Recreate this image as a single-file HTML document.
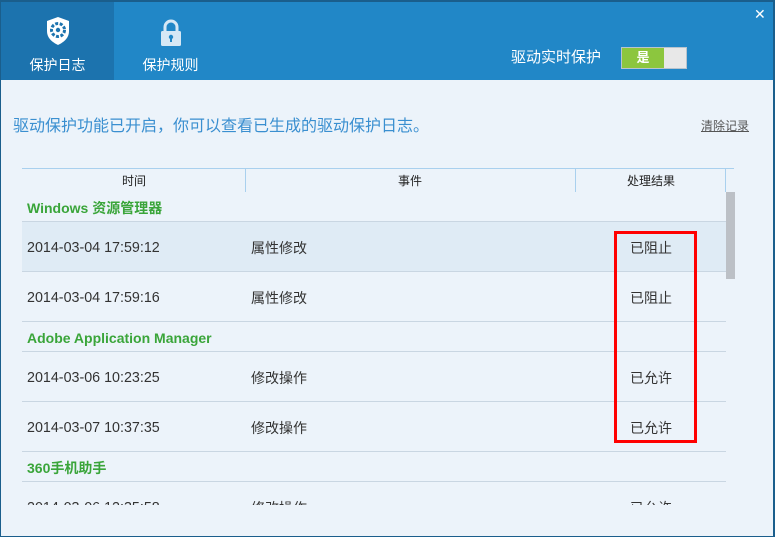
<!DOCTYPE html>
<html><head><meta charset="utf-8"><style>
*{margin:0;padding:0;box-sizing:border-box}
body{width:775px;height:537px;overflow:hidden;background:#1a5e8c;font-family:"Liberation Sans","Noto Sans CJK SC",sans-serif;position:relative;line-height:1}
.win{position:absolute;left:1px;top:2px;width:772px;height:534px;background:#ecf3fa;overflow:hidden}
.hdr{position:absolute;left:0;top:0;width:772px;height:78px;background:#2187c7}
.tab{position:absolute;top:0;height:78px;width:113px;color:#fff;font-size:14px;text-align:center}
.tab span{position:absolute;left:0;right:0;top:56px}
.t1{left:0;background:#1c73ae}
.t2{left:113px}
.abs{position:absolute;white-space:nowrap}
.line{position:absolute;left:21px;width:711px;height:1px;background:#c9d6e2}
.row{position:absolute;left:21px;font-size:14px;color:#333;line-height:16px}
.d{font-size:14.3px}
.grp{color:#3aa53a;font-weight:bold;font-size:14px}
</style></head><body>
<div class="win">
<div class="hdr">
 <div class="tab t1">
  <svg class="abs" style="left:43px;top:14px" width="28" height="30" viewBox="0 0 28 30"><path d="M14 1 L25 5 V15 C25 22 20 26 14 29 C8 26 3 22 3 15 V5 Z" fill="#fff"/><circle cx="14" cy="14" r="6.5" fill="none" stroke="#1c73ae" stroke-width="3" stroke-dasharray="3 1.6"/><circle cx="14" cy="14" r="2.2" fill="#1c73ae"/></svg>
  <span>保护日志</span></div>
 <div class="tab t2">
  <svg class="abs" style="left:43px;top:16px" width="28" height="30" viewBox="0 0 28 30"><path d="M8 13 V9 a6 6 0 0 1 12 0 V13" fill="none" stroke="#d6e8f5" stroke-width="3"/><rect x="4" y="13" width="20" height="15" rx="1.5" fill="#d6e8f5"/><circle cx="14" cy="19" r="2.2" fill="#2187c7"/><rect x="13" y="19" width="2" height="5" fill="#2187c7"/></svg>
  <span>保护规则</span></div>
 <div class="abs" style="left:510px;top:48px;color:#fff;font-size:15px">驱动实时保护</div>
 <div class="abs" style="left:620px;top:45px;width:66px;height:22px;background:#e8e8e8;border:1px solid #b8c4ce"></div>
 <div class="abs" style="left:621px;top:46px;width:42px;height:20px;background:#8cc63e;color:#fff;font-size:13px;text-align:center;line-height:20px;font-weight:bold">是</div>
 <div class="abs" style="left:753px;top:5px;color:#fff;font-size:14px">✕</div>
</div>
<div class="abs" style="left:12px;top:117px;color:#3a8fd0;font-size:16px">驱动保护功能已开启，你可以查看已生成的驱动保护日志。</div>
<div class="abs" style="left:700px;top:118px;color:#555;font-size:12px;text-decoration:underline">清除记录</div>
<div class="abs" style="left:21px;top:166px;width:712px;height:1px;background:#a9d0ee"></div>
<div class="abs" style="left:244px;top:166px;width:1px;height:24px;background:#a9d0ee"></div>
<div class="abs" style="left:574px;top:166px;width:1px;height:24px;background:#a9d0ee"></div>
<div class="abs" style="left:724px;top:166px;width:1px;height:24px;background:#a9d0ee"></div>
<div class="abs" style="left:121px;top:173px;font-size:12px;color:#222">时间</div>
<div class="abs" style="left:397px;top:173px;font-size:12px;color:#222">事件</div>
<div class="abs" style="left:626px;top:173px;font-size:12px;color:#222">处理结果</div>
<div class="abs" style="left:725px;top:190px;width:9px;height:87px;background:#bcc0c6"></div>
<div class="abs" style="left:0;top:190px;width:725px;height:313px;overflow:hidden">
 <div class="row grp" style="top:8px;left:26px">Windows 资源管理器</div>
 <div class="line" style="top:29px;width:704px"></div>
 <div class="abs" style="left:21px;top:30px;width:704px;height:49px;background:#dfebf5"></div>
 <div class="row d" style="top:48px;left:26px">2014-03-04 17:59:12</div><div class="row" style="top:48px;left:250px">属性修改</div><div class="row" style="top:48px;left:629px">已阻止</div>
 <div class="line" style="top:79px;width:704px"></div>
 <div class="row d" style="top:98px;left:26px">2014-03-04 17:59:16</div><div class="row" style="top:98px;left:250px">属性修改</div><div class="row" style="top:98px;left:629px">已阻止</div>
 <div class="line" style="top:129px;width:704px"></div>
 <div class="row grp" style="top:138px;left:26px">Adobe Application Manager</div>
 <div class="line" style="top:159px;width:704px"></div>
 <div class="row d" style="top:178px;left:26px">2014-03-06 10:23:25</div><div class="row" style="top:178px;left:250px">修改操作</div><div class="row" style="top:178px;left:629px">已允许</div>
 <div class="line" style="top:209px;width:704px"></div>
 <div class="row d" style="top:228px;left:26px">2014-03-07 10:37:35</div><div class="row" style="top:228px;left:250px">修改操作</div><div class="row" style="top:228px;left:629px">已允许</div>
 <div class="line" style="top:259px;width:704px"></div>
 <div class="row grp" style="top:268px;left:26px">360手机助手</div>
 <div class="line" style="top:289px;width:704px"></div>
 <div class="row d" style="top:308px;left:26px">2014-03-06 12:35:58</div><div class="row" style="top:308px;left:250px">修改操作</div><div class="row" style="top:308px;left:629px">已允许</div>
</div>
<div class="abs" style="left:613px;top:229px;width:83px;height:212px;border:3px solid #f00"></div>
</div>
</body></html>
